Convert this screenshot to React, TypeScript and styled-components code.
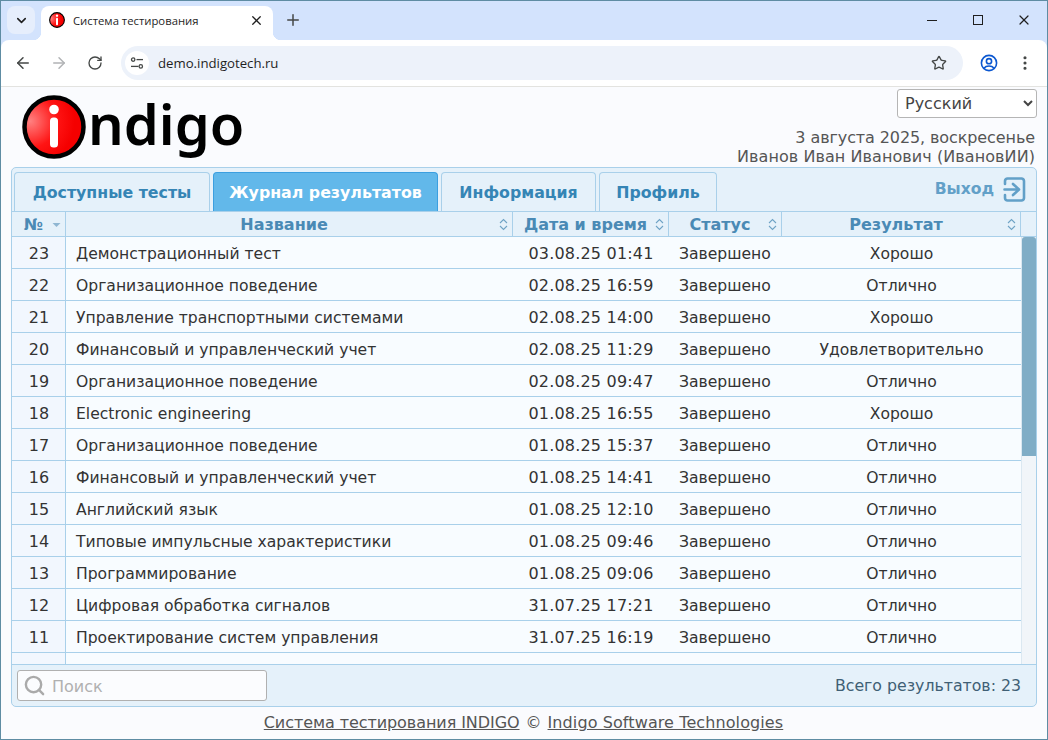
import React from 'react';
import styled, { createGlobalStyle } from 'styled-components';
import { ArrowLeft, ArrowRight, ChevronDown, EllipsisVertical, Plus, RotateCw, Search, Star, X } from 'lucide-react';

const GlobalStyle = createGlobalStyle`
    html, body {
        margin: 0;
        padding: 0;
        height: 100%;
        overflow: hidden;
    }
    * {
        box-sizing: border-box;
    }
`;

const COLUMNS = '54px 447px 156px 113px 239px';

const Window = styled.div`
    width: 1048px;
    height: 740px;
    border: 1px solid #5e8ca3;
    display: flex;
    flex-direction: column;
    background: #d3e3fd;
    font-family: 'DejaVu Sans', sans-serif;
`;

const TabStrip = styled.div`
    height: 39px;
    display: flex;
    align-items: flex-start;
    padding: 5px 0 0 6px;
    flex: none;
`;

const TabSwitcher = styled.div`
    width: 28px;
    height: 28px;
    border-radius: 8px;
    background: #e6eefc;
    color: #1f1f1f;
    display: flex;
    align-items: center;
    justify-content: center;
`;

const BrowserTab = styled.div`
    position: relative;
    width: 232px;
    height: 34px;
    margin-left: 6px;
    padding: 0 9px 6px 8px;
    background: #fff;
    border-radius: 8px 8px 0 0;
    display: flex;
    align-items: center;
    gap: 8px;
    color: #1f1f1f;
    font-family: 'Open Sans', sans-serif;
    font-size: 11.3px;

    &::before, &::after {
        content: '';
        position: absolute;
        bottom: 0;
        width: 8px;
        height: 8px;
        background: radial-gradient(circle at 0 0, #d3e3fd 8px, #fff 8.5px);
    }
    &::before {
        left: -8px;
    }
    &::after {
        right: -8px;
        transform: scaleX(-1);
    }
`;

const BrowserTabTitle = styled.span`
    flex: 1;
`;

const NewTab = styled.div`
    width: 28px;
    height: 28px;
    margin-left: 6px;
    color: #444746;
    display: flex;
    align-items: center;
    justify-content: center;
`;

const WindowControls = styled.div`
    margin-left: auto;
    display: flex;
    align-items: center;
    height: 28px;
    color: #1f1f1f;
`;

const WindowButton = styled.div`
    width: 46px;
    height: 28px;
    display: flex;
    align-items: center;
    justify-content: center;
`;

const MinimizeMark = styled.div`
    width: 10px;
    height: 1px;
    background: #1f1f1f;
`;

const MaximizeMark = styled.div`
    width: 10px;
    height: 10px;
    border: 1px solid #1f1f1f;
`;

const Toolbar = styled.div`
    height: 47px;
    flex: none;
    background: #fff;
    border-bottom: 1px solid #e3e3e0;
    border-radius: 8px 8px 0 0;
    display: flex;
    align-items: center;
    padding: 0 4px 1px 4px;
    color: #444746;
`;

const NavButton = styled.div<{ $dim?: boolean }>`
    width: 36px;
    height: 34px;
    flex: none;
    display: flex;
    align-items: center;
    justify-content: center;
    color: ${p => (p.$dim ? '#b1b3b5' : '#444746')};
`;

const UrlBar = styled.div`
    width: 842px;
    height: 34px;
    flex: none;
    margin-left: 8px;
    margin-right: 8px;
    background: #edf2fa;
    border-radius: 17px;
    display: flex;
    align-items: center;
    padding: 0 16px 0 4px;
`;

const SiteInfo = styled.div`
    width: 24px;
    height: 24px;
    border-radius: 50%;
    background: #fff;
    display: flex;
    align-items: center;
    justify-content: center;
`;

const UrlText = styled.span`
    margin-left: 9px;
    flex: 1;
    color: #1f1f1f;
    font-family: 'Open Sans', sans-serif;
    font-size: 13.2px;
`;

const Page = styled.div`
    flex: 1;
    min-height: 0;
    display: flex;
    flex-direction: column;
    background: #fafbfe;
    padding: 0 10px;
`;

const Header = styled.div`
    height: 80px;
    flex: none;
    display: flex;
    justify-content: space-between;
`;

const Logo = styled.div`
    display: flex;
    align-items: center;
    height: 80px;
    padding: 0 0 0 11px;
`;

const LogoWord = styled.span`
    font-family: 'Noto Sans', sans-serif;
    font-size: 56px;
    font-weight: 600;
    line-height: 72px;
    margin: 0 0 8px 2px;
    color: #000;
`;

const HeaderRight = styled.div`
    display: flex;
    flex-direction: column;
    align-items: flex-end;
    padding-top: 2px;
    color: #555;
    font-size: 16px;
    line-height: 19px;
`;

const LangSelect = styled.select`
    width: 140px;
    height: 29px;
    margin-bottom: 10px;
    padding-left: 3px;
    background: #fff;
    color: #444;
    border: 1px solid #b5b5b5;
    border-radius: 3px;
    font-family: 'DejaVu Sans', sans-serif;
    font-size: 16px;
`;

const InfoLine = styled.div<{ $spacing: number }>`
    padding-right: 2px;
    white-space: nowrap;
    letter-spacing: ${p => p.$spacing}px;
`;

const Panel = styled.div`
    height: 540px;
    flex: none;
    display: flex;
    flex-direction: column;
    background: #e5f1fa;
    border: 1px solid #a9d0ea;
    border-radius: 5px;
    overflow: hidden;
`;

const TabsBar = styled.div`
    height: 43px;
    flex: none;
    display: flex;
    align-items: flex-end;
    gap: 3px;
    padding: 0 10px 0 2px;
`;

const SectionTab = styled.div<{ $active?: boolean; $width: number }>`
    width: ${p => p.$width}px;
    height: 39px;
    display: flex;
    align-items: center;
    justify-content: center;
    font-size: 15.8px;
    font-weight: bold;
    border-radius: 4px 4px 0 0;
    border: 1px solid ${p => (p.$active ? '#3b9fe0' : '#a9d0ea')};
    border-bottom: 0;
    background: ${p => (p.$active ? '#62b8ea' : '#e5f1fa')};
    color: ${p => (p.$active ? '#fff' : '#3585b5')};
`;

const Logout = styled.div`
    margin-left: auto;
    align-self: center;
    display: flex;
    align-items: center;
    gap: 9px;
    padding-bottom: 1px;
    color: #62a0c8;
    font-size: 15.6px;
    font-weight: bold;
`;

const HeadRow = styled.div`
    height: 26px;
    flex: none;
    display: grid;
    grid-template-columns: ${COLUMNS} 1fr;
    border-top: 1px solid #a9d0ea;
    border-bottom: 1px solid #a9d0ea;
`;

const HeadCell = styled.div`
    position: relative;
    display: flex;
    align-items: center;
    justify-content: center;
    padding-right: 10px;
    border-right: 1px solid #a9d0ea;
    color: #4a8ab5;
    font-size: 16px;
    font-weight: bold;
`;

const HeadFiller = styled.div``;

const SortMark = styled.svg`
    position: absolute;
    right: 4px;
    top: 6px;
`;

const Body = styled.div`
    flex: 1;
    min-height: 0;
    display: flex;
    background: #f8fcff;
`;

const Rows = styled.div`
    flex: 1;
    min-width: 0;
    overflow: hidden;
`;

const Row = styled.div`
    height: 32px;
    display: grid;
    grid-template-columns: ${COLUMNS};
    grid-template-rows: 31px;
    border-bottom: 1px solid #a9d0ea;
    color: #333;
    font-size: 15.6px;
    line-height: 34px;
`;

const NumCell = styled.div`
    text-align: center;
    padding-left: 1px;
    font-size: 16px;
    line-height: 33px;
    background: #f2f7fe;
    border-right: 1px solid #a9d0ea;
`;

const NameCell = styled.div`
    padding-left: 10px;
    white-space: nowrap;
`;

const DateCell = styled.div`
    text-align: center;
    font-size: 16px;
    line-height: 33px;
    letter-spacing: 0.2px;
`;

const StatusCell = styled.div`
    padding-left: 10px;
`;

const ResultCell = styled.div`
    text-align: center;
`;

const ScrollTrack = styled.div`
    width: 15px;
    flex: none;
    background: #f1f5f9;
    border-left: 1px solid #dbe8f1;
`;

const ScrollThumb = styled.div`
    height: 219px;
    background: #80adc6;
    border-radius: 3px 3px 0 0;
`;

const PanelFooter = styled.div`
    height: 42px;
    flex: none;
    display: flex;
    align-items: center;
    justify-content: space-between;
    padding: 0 15px 0 5px;
    border-top: 1px solid #a9d0ea;
    color: #3f5f75;
    font-size: 15.75px;
`;

const SearchBox = styled.div`
    width: 250px;
    height: 31px;
    display: flex;
    align-items: center;
    gap: 6px;
    padding-left: 5px;
    background: #fbfcfe;
    border: 1px solid #b0b0b0;
    border-radius: 3px;
    color: #aaa;
`;

const SearchInput = styled.input`
    flex: 1;
    min-width: 0;
    padding: 2px 0 0 0;
    border: 0;
    outline: 0;
    background: transparent;
    font-family: 'DejaVu Sans', sans-serif;
    font-size: 16px;
    color: #444;

    &::placeholder {
        color: #b0b0b0;
    }
`;

const Copyright = styled.div`
    flex: 1;
    display: flex;
    align-items: center;
    justify-content: center;
    gap: 6px;
    padding: 0 1px 1px 0;
    color: #555;
    font-size: 16px;
`;

const FooterLink = styled.a<{ $spacing: number }>`
    color: #555;
    text-decoration: underline;
    letter-spacing: ${p => p.$spacing}px;
`;

const LogoMark = ({ size }: { size: number }) => (
    <svg width={size} height={size} viewBox="0 0 64 64">
        <defs>
            <radialGradient id={`ball${size}`} cx="0.1" cy="0.4" r="0.75">
                <stop offset="0" stopColor="#ff8080" />
                <stop offset="0.6" stopColor="#ff1414" />
                <stop offset="1" stopColor="#f50000" />
            </radialGradient>
        </defs>
        <circle cx="32" cy="32" r="29.5" fill={`url(#ball${size})`} stroke="#000" strokeWidth="4.5" />
        <circle cx="32" cy="14.5" r="4.8" fill="#fff" />
        <rect x="28" y="22.5" width="8" height="30" rx="3.5" fill="#fff" />
    </svg>
);

const SiteIcon = () => (
    <svg width="14" height="14" viewBox="0 0 14 14" fill="none" stroke="#444746" strokeWidth="1.3">
        <circle cx="3.2" cy="3.6" r="1.7" />
        <path d="M6.5 3.6h6.5" />
        <circle cx="10.8" cy="10.4" r="1.7" />
        <path d="M1 10.4h7.5" />
    </svg>
);

const ProfileIcon = () => (
    <svg width="18" height="18" viewBox="0 0 18 18" fill="none" stroke="#0b57d0" strokeWidth="1.6">
        <circle cx="9" cy="9" r="7.6" />
        <circle cx="9" cy="7.2" r="2.6" />
        <path d="M3.9 14.2c1.4-1.7 3.2-2.2 5.1-2.2s3.7.5 5.1 2.2" />
    </svg>
);

const LogoutIcon = () => (
    <svg width="23" height="25" viewBox="0 0 23 25" fill="none" stroke="#62a0c8" strokeWidth="2.6" strokeLinejoin="round" strokeLinecap="round">
        <path d="M2 7V4a2.5 2.5 0 0 1 2.5-2.5h14A2.5 2.5 0 0 1 21 4v17a2.5 2.5 0 0 1-2.5 2.5h-14A2.5 2.5 0 0 1 2 21v-3" />
        <path d="M1.5 12.5h13M10 7l6 5.5-6 5.5" />
    </svg>
);

const SortBoth = () => (
    <SortMark width="9" height="13" viewBox="0 0 9 13" fill="none" stroke="#6fa3c5" strokeWidth="1.1">
        <path d="M1 5l3.5-3.5L8 5M1 8l3.5 3.5L8 8" />
    </SortMark>
);

const SortDown = () => (
    <SortMark width="9" height="13" viewBox="0 0 9 13" fill="#8fb6d2">
        <path d="M0.5 5h8l-4 4z" />
    </SortMark>
);

const RESULTS = [
    [23, 'Демонстрационный тест', '03.08.25 01:41', 'Хорошо'],
    [22, 'Организационное поведение', '02.08.25 16:59', 'Отлично'],
    [21, 'Управление транспортными системами', '02.08.25 14:00', 'Хорошо'],
    [20, 'Финансовый и управленческий учет', '02.08.25 11:29', 'Удовлетворительно'],
    [19, 'Организационное поведение', '02.08.25 09:47', 'Отлично'],
    [18, 'Electronic engineering', '01.08.25 16:55', 'Хорошо'],
    [17, 'Организационное поведение', '01.08.25 15:37', 'Отлично'],
    [16, 'Финансовый и управленческий учет', '01.08.25 14:41', 'Отлично'],
    [15, 'Английский язык', '01.08.25 12:10', 'Отлично'],
    [14, 'Типовые импульсные характеристики', '01.08.25 09:46', 'Отлично'],
    [13, 'Программирование', '01.08.25 09:06', 'Отлично'],
    [12, 'Цифровая обработка сигналов', '31.07.25 17:21', 'Отлично'],
    [11, 'Проектирование систем управления', '31.07.25 16:19', 'Отлично'],
];

const App: React.FC = () => (
    <Window>
        <GlobalStyle />
        <TabStrip>
            <TabSwitcher>
                <ChevronDown size={15} strokeWidth={2.5} />
            </TabSwitcher>
            <BrowserTab>
                <LogoMark size={16} />
                <BrowserTabTitle>Система тестирования</BrowserTabTitle>
                <X size={15} strokeWidth={2} />
            </BrowserTab>
            <NewTab>
                <Plus size={18} strokeWidth={2} />
            </NewTab>
            <WindowControls>
                <WindowButton>
                    <MinimizeMark />
                </WindowButton>
                <WindowButton>
                    <MaximizeMark />
                </WindowButton>
                <WindowButton>
                    <X size={16} strokeWidth={1.8} />
                </WindowButton>
            </WindowControls>
        </TabStrip>
        <Toolbar>
            <NavButton>
                <ArrowLeft size={18} strokeWidth={2} />
            </NavButton>
            <NavButton $dim>
                <ArrowRight size={18} strokeWidth={2} />
            </NavButton>
            <NavButton>
                <RotateCw size={16} strokeWidth={2} />
            </NavButton>
            <UrlBar>
                <SiteInfo>
                    <SiteIcon />
                </SiteInfo>
                <UrlText>demo.indigotech.ru</UrlText>
                <Star size={16} strokeWidth={2} />
            </UrlBar>
            <NavButton>
                <ProfileIcon />
            </NavButton>
            <NavButton>
                <EllipsisVertical size={18} strokeWidth={2.2} />
            </NavButton>
        </Toolbar>
        <Page>
            <Header>
                <Logo>
                    <LogoMark size={64} />
                    <LogoWord>ndigo</LogoWord>
                </Logo>
                <HeaderRight>
                    <LangSelect defaultValue="ru">
                        <option value="ru">Русский</option>
                    </LangSelect>
                    <InfoLine $spacing={-0.1}>3 августа 2025, воскресенье</InfoLine>
                    <InfoLine $spacing={0.07}>Иванов Иван Иванович (ИвановИИ)</InfoLine>
                </HeaderRight>
            </Header>
            <Panel>
                <TabsBar>
                    <SectionTab $width={196}>Доступные тесты</SectionTab>
                    <SectionTab $width={225} $active>Журнал результатов</SectionTab>
                    <SectionTab $width={155}>Информация</SectionTab>
                    <SectionTab $width={118}>Профиль</SectionTab>
                    <Logout>
                        Выход
                        <LogoutIcon />
                    </Logout>
                </TabsBar>
                <HeadRow>
                    <HeadCell>№<SortDown /></HeadCell>
                    <HeadCell>Название<SortBoth /></HeadCell>
                    <HeadCell>Дата и время<SortBoth /></HeadCell>
                    <HeadCell>Статус<SortBoth /></HeadCell>
                    <HeadCell>Результат<SortBoth /></HeadCell>
                    <HeadFiller />
                </HeadRow>
                <Body>
                    <Rows>
                        {RESULTS.map(([num, name, date, result]) => (
                            <Row key={num}>
                                <NumCell>{num}</NumCell>
                                <NameCell>{name}</NameCell>
                                <DateCell>{date}</DateCell>
                                <StatusCell>Завершено</StatusCell>
                                <ResultCell>{result}</ResultCell>
                            </Row>
                        ))}
                        <Row>
                            <NumCell />
                        </Row>
                    </Rows>
                    <ScrollTrack>
                        <ScrollThumb />
                    </ScrollTrack>
                </Body>
                <PanelFooter>
                    <SearchBox>
                        <Search size={23} strokeWidth={2.5} />
                        <SearchInput placeholder="Поиск" />
                    </SearchBox>
                    Всего результатов: 23
                </PanelFooter>
            </Panel>
            <Copyright>
                <FooterLink $spacing={-0.07}>Система тестирования INDIGO</FooterLink>
                ©
                <FooterLink $spacing={0.1}>Indigo Software Technologies</FooterLink>
            </Copyright>
        </Page>
    </Window>
);

export default App;
